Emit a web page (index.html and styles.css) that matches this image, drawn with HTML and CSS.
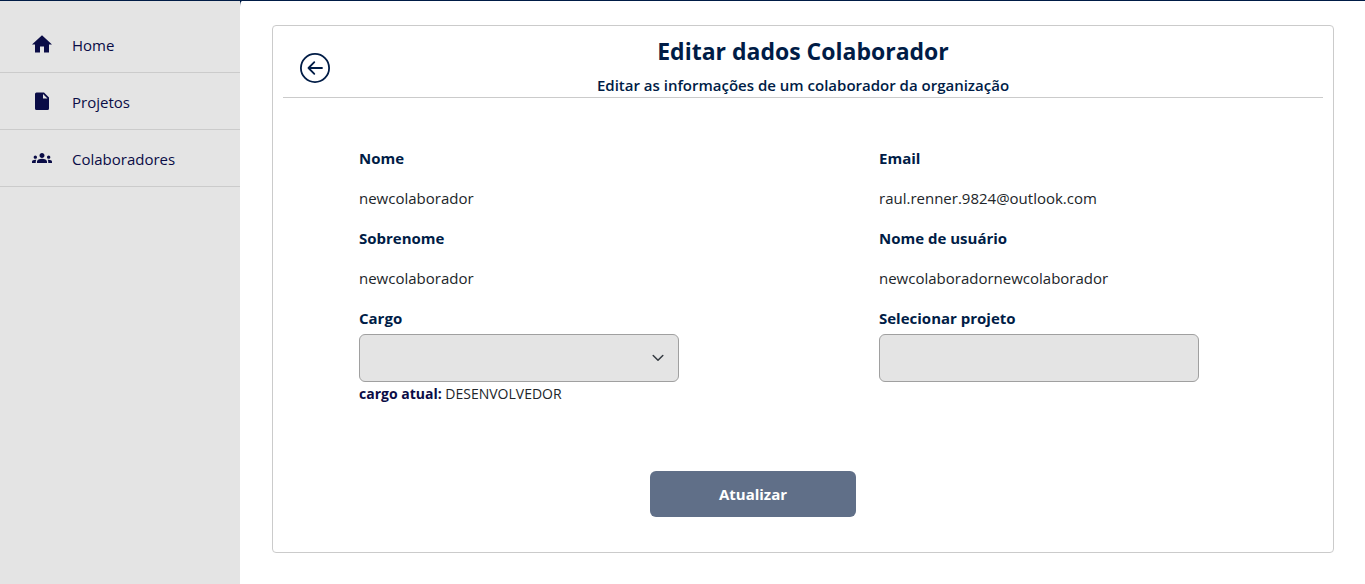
FILE: index.html
```
<!DOCTYPE html>
<html lang="pt-BR">
<head>
<meta charset="utf-8">
<meta name="viewport" content="width=device-width, initial-scale=1">
<title>Editar dados Colaborador</title>
<link rel="stylesheet" href="styles.css">
</head>
<body>
<div class="shell">
  <nav class="sidebar">
    <a class="nav-link" href="#home">
      <svg class="nav-icon" viewBox="0 0 24 24" aria-hidden="true"><path d="M10 20.500v-6h4v6h5v-8h3L12 3.200 2 12.500h3v8z"/></svg>
      <span>Home</span>
    </a>
    <a class="nav-link" href="#projetos">
      <svg class="nav-icon" viewBox="0 0 24 24" aria-hidden="true"><path fill-rule="evenodd" d="M6.500 3.500h7.500l5 5V19.500a1.500 1.500 0 0 1-1.500 1.500H6.500a1.500 1.500 0 0 1-1.500-1.500V5a1.500 1.500 0 0 1 1.500-1.500zM13 5v4.500h4.500z"/></svg>
      <span>Projetos</span>
    </a>
    <a class="nav-link" href="#colaboradores">
      <svg class="nav-icon" viewBox="-2.400 -2.400 28.800 28.800" aria-hidden="true"><path d="M4 13c1.100 0 2-.9 2-2s-.9-2-2-2-2 .9-2 2 .9 2 2 2zm1.130 1.100C4.760 14.040 4.390 14 4 14c-.99 0-1.930.21-2.780.58C.48 14.900 0 15.620 0 16.430V18h4.500v-1.610c0-.83.23-1.610.63-2.290zM20 13c1.100 0 2-.9 2-2s-.9-2-2-2-2 .9-2 2 .9 2 2 2zm4 3.430c0-.81-.48-1.530-1.220-1.850C21.930 14.210 20.990 14 20 14c-.39 0-.76.04-1.130.1.400.68.63 1.460.63 2.290V18H24v-1.570zM16.240 13.650C15.070 13.130 13.630 12.750 12 12.750s-3.070.39-4.240.9C6.680 14.130 6 15.210 6 16.390V18h12v-1.610c0-1.180-.68-2.260-1.760-2.740zM9 9c0 1.660 1.340 3 3 3s3-1.340 3-3-1.340-3-3-3-3 1.340-3 3z"/></svg>
      <span>Colaboradores</span>
    </a>
  </nav>
  <main class="content">
    <section class="card">
      <header class="card-header">
        <button class="back" type="button" aria-label="Voltar">
          <svg class="back-icon" viewBox="0 0 30 30" aria-hidden="true"><circle cx="15" cy="15" r="14.100"/><path d="M22 15H8.500M14.300 9.200L8.500 15l5.800 5.800"/></svg>
        </button>
        <div class="heading">
          <h1 class="title">Editar dados Colaborador</h1>
          <p class="subtitle">Editar as informações de um colaborador da organização</p>
        </div>
      </header>
      <form class="form">
        <div class="fields">
          <div class="column">
            <h2 class="label">Nome</h2>
            <p class="value">newcolaborador</p>
            <h2 class="label">Sobrenome</h2>
            <p class="value">newcolaborador</p>
            <div class="field">
              <label class="label" for="cargo">Cargo</label>
              <div class="select-wrap">
                <select class="control" id="cargo"><option value=""></option><option>DESENVOLVEDOR</option></select>
                <svg class="chevron" viewBox="0 0 12 12" aria-hidden="true"><path d="M1.200 3.500L6 8.300l4.800-4.800"/></svg>
              </div>
              <p class="hint"><strong class="hint-label">cargo atual:</strong> DESENVOLVEDOR</p>
            </div>
          </div>
          <div class="column">
            <h2 class="label">Email</h2>
            <p class="value">raul.renner.9824@outlook.com</p>
            <h2 class="label">Nome de usuário</h2>
            <p class="value">newcolaboradornewcolaborador</p>
            <div class="field">
              <label class="label" for="projeto">Selecionar projeto</label>
              <input class="control" id="projeto" type="text">
            </div>
          </div>
        </div>
        <div class="actions">
          <button class="submit" type="submit">Atualizar</button>
        </div>
      </form>
    </section>
  </main>
</div>
</body>
</html>
```
FILE: styles.css
```
* { box-sizing: border-box; }

body {
  margin: 0;
  background: #001c46;
  color: #212529;
  font: 15px/24px "Segoe UI", "Open Sans", "Noto Sans", sans-serif;
}

h1, h2, p { margin: 0; }

.shell {
  display: flex;
  min-height: 100vh;
  border-top: 1px solid #001c46;
}

.sidebar {
  flex: 0 0 240px;
  padding-top: 15px;
  background: #e4e4e4;
}

.nav-link {
  display: flex;
  align-items: center;
  gap: 18px;
  height: 57px;
  padding: 2px 30px 0;
  border-bottom: 1px solid #cbcbcb;
  color: #0a0c46;
  text-decoration: none;
}

.nav-icon {
  width: 24px;
  height: 24px;
  margin-bottom: 2px;
  fill: currentColor;
}

.content {
  flex: 1;
  min-width: 0;
  padding: 24px 31px 31px 32px;
  border-top-left-radius: 2px 6px;
  background: #fff;
}

.card {
  padding: 10px 10px 35px;
  border: 1px solid #cbcbcb;
  border-radius: 4px;
}

.card-header {
  display: grid;
  align-items: center;
  border-bottom: 1px solid #cbcbcb;
  color: #001c46;
  text-align: center;
}

.back, .heading { grid-area: 1 / 1; }

.back {
  justify-self: start;
  width: 30px;
  height: 30px;
  margin: 2px 0 0 17px;
  padding: 0;
  border: 0;
  background: none;
  color: inherit;
  cursor: pointer;
}

.back-icon {
  display: block;
  fill: none;
  stroke: currentColor;
  stroke-width: 1.8;
  stroke-linecap: round;
  stroke-linejoin: round;
}

.title {
  margin-bottom: 6px;
  font-size: 23px;
  line-height: 31px;
  font-weight: 700;
}

.subtitle { font-weight: 600; }

.form { padding-top: 48px; }

.fields {
  display: grid;
  grid-template-columns: 1fr 1fr;
}

.column { padding-left: 76px; }

.label {
  display: block;
  color: #001c46;
  font-size: 15px;
  line-height: 24px;
  font-weight: 700;
}

.value { margin: 16px 0; }

.field { max-width: 320px; }

.select-wrap { display: grid; align-items: center; }

.select-wrap .control, .chevron { grid-area: 1 / 1; }

.control {
  display: block;
  width: 100%;
  height: 48px;
  margin-top: 4px;
  padding: 0 16px;
  border: 1px solid #a0a0a0;
  border-radius: 6px;
  background: #e4e4e4;
  color: inherit;
  font: inherit;
  appearance: none;
}

.chevron {
  justify-self: end;
  width: 12px;
  height: 12px;
  margin: 4px 15px 0 0;
  fill: none;
  stroke: #343a40;
  stroke-width: 1.5;
  stroke-linecap: round;
  stroke-linejoin: round;
  pointer-events: none;
}

.hint {
  padding-bottom: 2px;
  font-size: 14px;
}

.hint-label { color: #0a0c46; }

.actions {
  display: flex;
  justify-content: center;
  margin: 63px 100px 0 0;
}

.submit {
  width: 206px;
  height: 46px;
  border: 0;
  border-radius: 6px;
  background: #606f88;
  color: #fff;
  font: inherit;
  font-weight: 700;
  cursor: pointer;
}
```
